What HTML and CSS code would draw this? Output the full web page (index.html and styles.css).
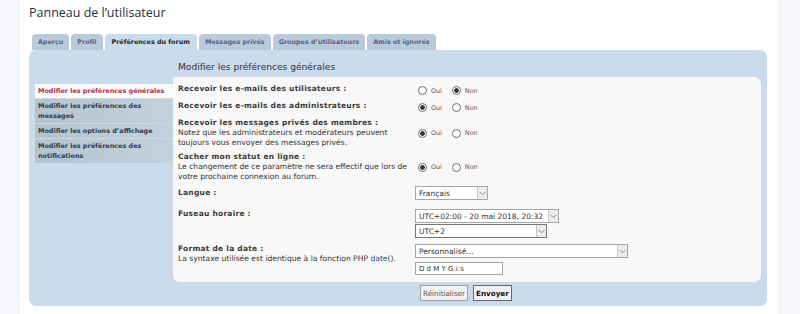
FILE: index.html
```html
<!DOCTYPE html>
<html lang="fr">
<head>
    <meta charset="utf-8">
    <title>Panneau de l’utilisateur</title>
    <link rel="stylesheet" href="styles.css">
</head>
<body>
    <div class="wrap">
        <h2 class="page-title">Panneau de l’utilisateur</h2>

        <ul class="tabs">
            <li class="tab">Aperçu</li>
            <li class="tab">Profil</li>
            <li class="tab active">Préférences du forum</li>
            <li class="tab">Messages privés</li>
            <li class="tab">Groupes d’utilisateurs</li>
            <li class="tab">Amis et ignorés</li>
        </ul>

        <div class="panel">
            <ul class="menu">
                <li class="menu-item active">Modifier les préférences générales</li>
                <li class="menu-item">Modifier les préférences des messages</li>
                <li class="menu-item">Modifier les options d’affichage</li>
                <li class="menu-item">Modifier les préférences des notifications</li>
            </ul>

            <div class="main">
                <h3 class="main-title">Modifier les préférences générales</h3>

                <form class="box">
                    <dl class="row">
                        <dt><b>Recevoir les e-mails des utilisateurs :</b></dt>
                        <dd class="radios">
                            <label><input type="radio" name="r1"> Oui</label>
                            <label><input type="radio" name="r1" checked> Non</label>
                        </dd>
                    </dl>
                    <dl class="row">
                        <dt><b>Recevoir les e-mails des administrateurs :</b></dt>
                        <dd class="radios">
                            <label><input type="radio" name="r2" checked> Oui</label>
                            <label><input type="radio" name="r2"> Non</label>
                        </dd>
                    </dl>
                    <dl class="row">
                        <dt><b>Recevoir les messages privés des membres :</b><br>Notez que les administrateurs et modérateurs peuvent toujours vous envoyer des messages privés.</dt>
                        <dd class="radios">
                            <label><input type="radio" name="r3" checked> Oui</label>
                            <label><input type="radio" name="r3"> Non</label>
                        </dd>
                    </dl>
                    <dl class="row">
                        <dt><b>Cacher mon statut en ligne :</b><br>Le changement de ce paramètre ne sera effectif que lors de votre prochaine connexion au forum.</dt>
                        <dd class="radios">
                            <label><input type="radio" name="r4" checked> Oui</label>
                            <label><input type="radio" name="r4"> Non</label>
                        </dd>
                    </dl>
                    <dl class="row row-lang">
                        <dt class="dt-low"><b>Langue :</b></dt>
                        <dd>
                            <div class="select w-lang"><span>Français</span><i class="arrow"><svg width="7" height="5" viewBox="0 0 7 5"><path d="M0.5 0.8 L3.5 3.8 L6.5 0.8" fill="none" stroke="#8a8a8a" stroke-width="1"/></svg></i></div>
                        </dd>
                    </dl>
                    <dl class="row row-tz">
                        <dt><b>Fuseau horaire :</b></dt>
                        <dd>
                            <div class="select w-tz"><span>UTC+02:00 - 20 mai 2018, 20:32</span><i class="arrow"><svg width="7" height="5" viewBox="0 0 7 5"><path d="M0.5 0.8 L3.5 3.8 L6.5 0.8" fill="none" stroke="#8a8a8a" stroke-width="1"/></svg></i></div>
                            <div class="select w-utc dark"><span>UTC+2</span><i class="arrow"><svg width="7" height="5" viewBox="0 0 7 5"><path d="M0.5 0.8 L3.5 3.8 L6.5 0.8" fill="none" stroke="#8a8a8a" stroke-width="1"/></svg></i></div>
                        </dd>
                    </dl>
                    <dl class="row row-date">
                        <dt><b>Format de la date :</b><br>La syntaxe utilisée est identique à la fonction PHP <a href="#">date</a>().</dt>
                        <dd>
                            <div class="select w-date"><span>Personnalisé…</span><i class="arrow"><svg width="7" height="5" viewBox="0 0 7 5"><path d="M0.5 0.8 L3.5 3.8 L6.5 0.8" fill="none" stroke="#8a8a8a" stroke-width="1"/></svg></i></div>
                            <input class="text-input" type="text" value="D d M Y G:i:s">
                        </dd>
                    </dl>
                </form>

                <div class="buttons">
                    <button class="btn">Réinitialiser</button>
                    <button class="btn primary">Envoyer</button>
                </div>
            </div>
        </div>
    </div>
</body>
</html>
```

FILE: styles.css
```css
body {
    margin: 0;
    background: #f5f7fa;
    font-family: "DejaVu Sans", Verdana, sans-serif;
    color: #333;
}

.wrap {
    margin: 0 23px 0 20px;
    padding: 0 10px 0 9px;
    background: #fff;
    height: 314px;
    box-sizing: border-box;
}

.page-title {
    margin: 0;
    padding-top: 4px;
    font-family: "Open Sans", sans-serif;
    font-weight: normal;
    font-size: 12.5px;
    line-height: 18px;
    color: #28313f;
}

.tabs {
    list-style: none;
    margin: 12px 0 0 3px;
    padding: 0;
    display: flex;
    gap: 2px;
}

.tab {
    height: 16px;
    line-height: 16px;
    padding: 0 6px;
    font-size: 6.4px;
    font-weight: bold;
    color: #536482;
    background: #b9cadb;
    border-radius: 4px 4px 0 0;
}

.tab.active {
    background: #cadceb;
    color: #222;
    height: 17px;
    margin-bottom: -1px;
    padding: 0 7px;
}

.panel {
    background: #cadceb;
    border-radius: 7px;
    padding: 9px 6px 5px 6px;
    display: flex;
}

.menu {
    list-style: none;
    margin: 25px 0 0 0;
    padding: 0;
    width: 138px;
    flex: none;
}

.menu-item {
    font-size: 6.45px;
    font-weight: bold;
    line-height: 10px;
    padding: 2px 3px;
    margin-bottom: 1px;
    color: #2e3a4b;
    background: linear-gradient(to right, #b5c3cf, #c3d1dd);
}

.menu-item.active {
    background: #fafafa;
    color: #bc2a4d;
}

.main {
    flex: 1;
}

.main-title {
    margin: 0 0 2px 5px;
    font-weight: normal;
    font-size: 9.1px;
    line-height: 16px;
    color: #28313f;
}

.box {
    background: #f8f8f8;
    border-radius: 3px 7px 7px 7px;
    padding: 4px 0 7px 0;
    margin: 0;
}

.row {
    display: flex;
    margin: 0;
    padding: 3px 0 1px 0;
    min-height: 13px;
}

.row dt {
    width: 237px;
    padding-left: 5px;
    flex: none;
    font-size: 7.6px;
    line-height: 10px;
}

.row dt b {
    font-size: 7.5px;
    letter-spacing: 0.25px;
    color: #3a3a3a;
}

.row dt a {
    color: #105289;
    text-decoration: none;
}

.row dd {
    margin: 0;
}

.radios {
    display: flex;
    gap: 10px;
    padding-left: 3px;
    font-size: 6.4px;
    line-height: 10px;
    color: #555;
}

.radios label {
    display: flex;
    align-items: center;
    gap: 4px;
}

.radios input {
    appearance: none;
    margin: 0;
    width: 9px;
    height: 9px;
    border: 1px solid #6f6f6f;
    border-radius: 50%;
    background: #fff;
    box-sizing: border-box;
}

.radios input:checked {
    background: radial-gradient(circle, #333 0, #333 2px, #fff 2.6px);
}

.row-lang {
    padding: 3px 0 4px 0;
}

.row-tz {
    padding: 4px 0 3px 0;
}

.row-date {
    padding: 2px 0 0 0;
}

.dt-low {
    padding-top: 2px;
}

.select {
    height: 14px;
    box-sizing: border-box;
    border: 1px solid #a5a5a5;
    background: #fff;
    display: flex;
    align-items: center;
    justify-content: space-between;
    font-size: 7.5px;
    color: #333;
    padding-left: 3px;
    margin-bottom: 1px;
}

.select.dark {
    border-color: #777;
}

.arrow {
    width: 10px;
    height: 12px;
    box-sizing: border-box;
    border-left: 1px solid #c8c8c8;
    background: #ececec;
    display: flex;
    align-items: center;
    justify-content: center;
}

.w-lang { width: 73px; }
.w-tz { width: 144px; }
.w-utc { width: 132px; }
.w-date { width: 213px; margin-bottom: 4px; }

.text-input {
    display: block;
    width: 88px;
    height: 13px;
    box-sizing: border-box;
    border: 1px solid #a5a5a5;
    padding: 0 3px;
    font-family: "DejaVu Sans", Verdana, sans-serif;
    font-size: 7px;
    color: #333;
    background: #fff;
}

.buttons {
    display: flex;
    gap: 5px;
    margin: 3px 0 0 247px;
}

.btn {
    height: 16px;
    padding: 0 2px;
    border: 1px solid #a0a0a0;
    background: #f1f1f1;
    font-family: "DejaVu Sans", Verdana, sans-serif;
    font-size: 7.2px;
    color: #555;
    box-sizing: border-box;
}

.btn.primary {
    font-weight: bold;
    color: #111;
    border-color: #666;
}
```
